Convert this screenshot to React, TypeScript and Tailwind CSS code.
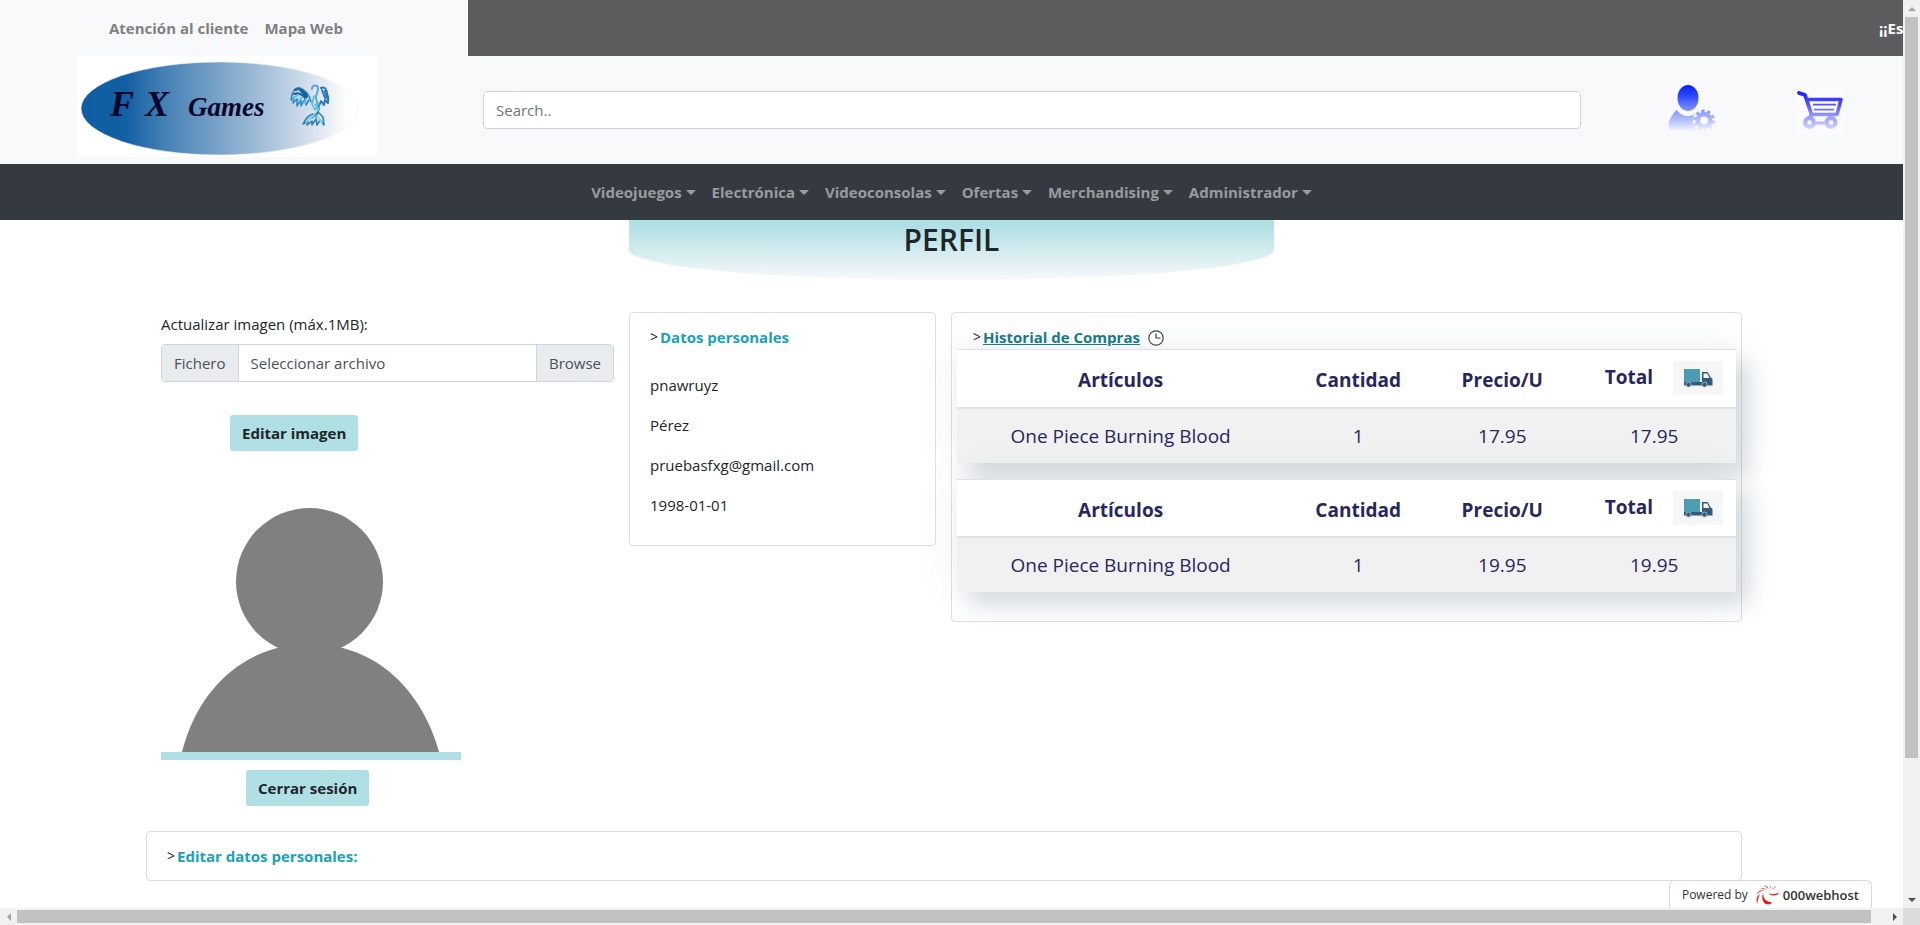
import React from "react";

const navItems = ["Videojuegos", "Electrónica", "Videoconsolas", "Ofertas", "Merchandising", "Administrador"];
const personal = ["pnawruyz", "Pérez", "pruebasfxg@gmail.com", "1998-01-01"];
const orders = [
  { item: "One Piece Burning Blood", qty: 1, price: "17.95", total: "17.95" },
  { item: "One Piece Burning Blood", qty: 1, price: "19.95", total: "19.95" },
];

function Logo() {
  return (
    <svg width="300" height="101" viewBox="0 0 300 101" role="img" aria-label="FX Games" className="block bg-white">
      <defs>
        <linearGradient id="oval" x1="0" x2="1" y1="0" y2="0">
          <stop offset="0" stopColor="#0f5ea3" />
          <stop offset="0.16" stopColor="#125fa3" />
          <stop offset="0.3" stopColor="#4480b5" />
          <stop offset="0.52" stopColor="#80a7cb" />
          <stop offset="0.72" stopColor="#b4cbe0" />
          <stop offset="0.86" stopColor="#dfe7f1" />
          <stop offset="0.96" stopColor="#ffffff" />
        </linearGradient>
      </defs>
      <ellipse cx="142.5" cy="52.5" rx="138.5" ry="46.5" fill="url(#oval)" stroke="#eef1f7" strokeWidth="0.6" />
      <g fill="#07072b" fontFamily="'Liberation Serif', serif" fontStyle="italic" fontWeight="700">
        <text x="33" y="60" fontSize="36">F</text>
        <text x="68" y="60" fontSize="36">X</text>
        <text x="111" y="60" fontSize="27">Games</text>
      </g>
      <g fill="none" strokeLinecap="round" strokeLinejoin="round">
        <path d="M234 46c-1-6-5-12-11-14-4-1-7 2-8 7l-1 5 3-3-1 6 4-4v7l4-6v6l4-7 1 6 3-5" stroke="#2a86c4" strokeWidth="1.5" />
        <path d="M218 34c4-2 9 0 12 5M217 38c5-2 9 1 12 5M222 33l8 8" stroke="#1a5f9e" strokeWidth="2" />
        <path d="M216 42l5-3M222 45l3-4M228 47l1-4" stroke="#5cc6ec" strokeWidth="2" />
        <path d="M235 33c0-4 5-5 6-1 1 4-3 6-2 11l3 9c0 5-5 7-7 10" stroke="#5aa5d4" strokeWidth="2" />
        <path d="M244 32c4-2 6 2 6 6 2 3 1 7 1 9l-3-3-1 5-3-4-2 5M245 34l3 8M248 35l2 7" stroke="#2a78b8" strokeWidth="2" />
        <path d="M237 40l-2 8 3 6 4-6M238 48l4 6" stroke="#49b7e4" strokeWidth="1.5" />
        <path d="M236 58c-5 1-7 5-10 10l5-3-1 4 5-4 0 4 4-6 1 6 3-5 4 5-1-8-5-5-2 5" stroke="#2f7fbb" strokeWidth="1.6" />
        <path d="M232 62l4-2M240 60l5 7M229 66l4-3" stroke="#7fd3f2" strokeWidth="1.6" />
      </g>
    </svg>
  );
}

function UserGear() {
  return (
    <svg width="47" height="46" viewBox="0 0 47 46" aria-hidden="true" className="bg-[#fafafc]">
      <defs>
        <linearGradient id="ug" gradientUnits="userSpaceOnUse" x1="0" x2="0" y1="0" y2="46">
          <stop offset="0" stopColor="#0022ff" />
          <stop offset="0.25" stopColor="#2f4bff" />
          <stop offset="0.6" stopColor="#8f9fff" />
          <stop offset="0.8" stopColor="#bcc6ff" />
          <stop offset="1" stopColor="#f4f6ff" />
        </linearGradient>
      </defs>
      <ellipse cx="20" cy="13" rx="10.5" ry="13" fill="url(#ug)" />
      <path d="M9 25c5 8 16 8 21 1 3 1 4 2 6 3l-10 9 3 8H3c-5-3-2-15 6-21z" fill="url(#ug)" />
      <circle cx="36" cy="35.5" r="11.500" fill="#fafafc" />
      <g fill="none" stroke="url(#ug)">
        <circle cx="36" cy="35.500" r="6.200" strokeWidth="4.600" />
        <circle cx="36" cy="35.500" r="9.500" strokeWidth="3" strokeDasharray="3.300 2.670" />
      </g>
    </svg>
  );
}

function Cart() {
  return (
    <svg width="50" height="50" viewBox="0 0 50 50" aria-hidden="true" className="bg-[#fbfbfd]">
      <defs>
        <linearGradient id="cart" gradientUnits="userSpaceOnUse" x1="0" x2="0" y1="5" y2="46">
          <stop offset="0" stopColor="#1414ff" />
          <stop offset="0.35" stopColor="#5050ff" />
          <stop offset="0.65" stopColor="#9c9cff" />
          <stop offset="1" stopColor="#dedeff" />
        </linearGradient>
      </defs>
      <g stroke="url(#cart)" fill="none" strokeLinecap="round" strokeLinejoin="round">
        <path d="M4 8l6 2 6.500 19.500-2 3.500" strokeWidth="3.800" />
        <path d="M12 14.500h34l-4 15H16.500" strokeWidth="3.600" />
        <path d="M18 19.600h23M19 24.600h20" strokeWidth="1.800" strokeLinecap="butt" />
        <circle cx="14.500" cy="37.500" r="4.400" strokeWidth="4.200" />
        <circle cx="36" cy="37.500" r="4.400" strokeWidth="4.200" />
        <path d="M19 38h12.500v.1" strokeWidth="3" />
      </g>
    </svg>
  );
}

function Truck() {
  return (
    <svg width="50" height="34" viewBox="0 0 50 34" role="img" aria-label="Envío" className="shrink-0 bg-[#f6f6f6]">
      <path d="M11 8h16v13H11z" fill="#4c9db3" />
      <path d="M11 21h18v3.500H11z" fill="#35597a" />
      <path d="M29 11h5.500l3 5 2 2v6.500H29z" fill="#35597a" />
      <path d="M30.500 12.500h3.700l2.300 4.500h-6z" fill="#f4f8fa" />
      <circle cx="15.500" cy="23.500" r="2.500" fill="#35597a" stroke="#9fb6c6" />
      <circle cx="31.500" cy="23.500" r="2.500" fill="#35597a" stroke="#9fb6c6" />
    </svg>
  );
}

function Avatar() {
  return (
    <svg width="300" height="252" viewBox="0 0 300 252" role="img" aria-label="Imagen de perfil" className="block">
      <g fill="#808080">
        <circle cx="148.500" cy="81.500" r="73.500" />
        <path d="M21 252C36 191 82 144 149 144s112 47 129 108z" />
      </g>
    </svg>
  );
}

function HostMark() {
  return (
    <svg width="23" height="20" viewBox="0 0 23 20" aria-hidden="true">
      <g fill="#d81f10">
        <path d="M7.500 8c-1 5 2 9 8.500 9.300-1 3-7 3.200-9-1.300C5.800 13 6 10 7.500 8z" />
        <path d="M12 7c1 2.500 6 3 11 .5-1 3.800-9.500 4.500-11-.5z" />
        <path d="M1.200 19C-.2 14.500.5 11.500 4 9 2.500 12 1.600 15 1.200 19z" />
        <path d="M.5 10C1.500 6.500 4.500 4.800 8 5.500 5 5.800 2.500 7 .5 10z" />
        <path d="M3 4c3-1.500 6-1 7.500 1C8 4 5.500 3.500 3 4zM8 .5c2.500 0 4 1.500 4.500 3.500C11 2.500 10 1.500 8 .5zM14 .3c1 1 1 2.500.3 3.700C14.300 2.500 14.300 1.500 14 .3zM20 1c-.5 2-2.500 3-4.500 3.500C17 3.500 18.500 2.500 20 1z" />
      </g>
    </svg>
  );
}

function OrderTable({ order }: { order: (typeof orders)[number] }) {
  return (
    <table className="mb-4 w-full table-fixed border-collapse bg-white text-center text-[19px] leading-[30px] text-[#27275f] shadow-[14px_14px_20px_rgba(70,100,115,0.18),0_0_36px_rgba(70,100,115,0.1)]">
      <colgroup>
        <col className="w-[42%]" />
        <col className="w-[19%]" />
        <col className="w-[18%]" />
        <col className="w-[21%]" />
      </colgroup>
      <thead>
        <tr className="h-[58px] border-t border-b-2 border-t-[#dee2e6] border-b-[#dee2e6]">
          <th scope="col" className="pt-1">Artículos</th>
          <th scope="col" className="pt-1">Cantidad</th>
          <th scope="col" className="pt-1">Precio/U</th>
          <th scope="col">
            <div className="flex items-center justify-end gap-5 pr-[13px]">
              <span className="pb-0.5">Total</span>
              <Truck />
            </div>
          </th>
        </tr>
      </thead>
      <tbody>
        <tr className="h-[55px] bg-[#f1f1f1]">
          <td>{order.item}</td>
          <td>{order.qty}</td>
          <td>{order.price}</td>
          <td>{order.total}</td>
        </tr>
      </tbody>
    </table>
  );
}

const panel = "rounded border border-[#dfdfdf]";
const actionButton = "h-9 rounded-[3px] bg-[#b0e0e4] px-3 font-bold";

export default function App() {
  return (
    <div className="flex h-screen flex-col overflow-hidden bg-white font-['Open_Sans','Noto_Sans',sans-serif] text-[15px] leading-6 text-[#212529]">
      <div className="flex min-h-0 flex-1">
        <div className="relative min-w-0 flex-1 overflow-hidden">
          <header className="bg-[#f8f9fb]">
            <div className="flex h-14">
              <nav aria-label="Ayuda" className="flex w-[24.6%] items-center gap-4 pl-[109px] font-bold text-[#808080]">
                <a href="#atencion">Atención al cliente</a>
                <a href="#mapa">Mapa Web</a>
              </nav>
              <div className="flex flex-1 items-center justify-end overflow-hidden bg-[#5c5c5e] font-bold text-white">
                <span className="w-6 whitespace-nowrap">¡¡Es</span>
              </div>
            </div>
            <div className="flex h-[108px] items-start">
              <a href="#inicio" className="ml-[77px] shrink-0">
                <Logo />
              </a>
              <input
                type="search"
                aria-label="Buscar"
                placeholder="Search.."
                className="mt-[35px] ml-[106px] h-[38px] min-w-0 flex-1 rounded border border-[#ced4da] bg-white px-3 placeholder:text-[#6c757d]"
              />
              <a href="#perfil" aria-label="Perfil" className="mt-[29px] ml-[87px]">
                <UserGear />
              </a>
              <a href="#carrito" aria-label="Carrito" className="mt-[29px] mr-[58px] ml-20">
                <Cart />
              </a>
            </div>
          </header>
          <nav aria-label="Principal" className="flex h-14 items-center justify-center gap-4 bg-[#343a40] font-bold text-[#999c9f]">
            {navItems.map((label) => (
              <button key={label} type="button" className="flex items-center gap-1 font-bold">
                {label}
                <span className="border-x-5 border-t-5 border-x-transparent border-t-[#999c9f]" />
              </button>
            ))}
          </nav>

          <main className="pr-[161px] pl-[146px]">
            <div className="grid grid-cols-[468fr_307fr_791fr] gap-x-[15px]">
              <div className="col-span-3 grid grid-cols-subgrid">
                <h1 className="col-start-2 col-end-4 mr-[468px] h-[60px] rounded-b-[50%_30px] bg-linear-to-b from-[#b0e0e4] from-10% to-[#f8f9fb] pt-0.5 text-center text-[30px] leading-9 font-semibold">
                  PERFIL
                </h1>
              </div>

              <section aria-label="Imagen" className="mt-8 pl-[15px]">
                <label htmlFor="fichero" className="mb-2 block">Actualizar imagen (máx.1MB):</label>
                <label htmlFor="fichero" className="flex h-[38px] overflow-hidden rounded border border-[#ced4da] leading-9 text-[#495057]">
                  <span className="border-r border-[#ced4da] bg-[#e9ecef] px-3">Fichero</span>
                  <span className="flex-1 px-3">Seleccionar archivo</span>
                  <span className="border-l border-[#ced4da] bg-[#e9ecef] px-3">Browse</span>
                  <input id="fichero" type="file" className="sr-only" />
                </label>
                <div className="mt-[33px] ml-[69px]">
                  <button type="button" className={actionButton}>Editar imagen</button>
                </div>
                <div className="mt-[49px] w-[300px] border-b-8 border-[#b0e0e4]">
                  <Avatar />
                </div>
                <div className="mt-[10px] ml-[85px]">
                  <button type="button" className={actionButton}>Cerrar sesión</button>
                </div>
              </section>

              <section className={`${panel} mt-8 h-[234px] pt-3 pl-5`}>
                <h2 className="flex items-center gap-0.5 font-bold text-[#17a2b8]">
                  <span className="text-[14px] font-normal text-[#212529]">&gt;</span>
                  Datos personales
                </h2>
                <ul className="mt-6 flex flex-col gap-4">
                  {personal.map((value) => (
                    <li key={value}>{value}</li>
                  ))}
                </ul>
              </section>

              <section className={`${panel} mt-8 h-[310px] px-[5px] pt-3`}>
                <h2 className="flex h-6 items-center gap-0.5 pl-4 font-bold">
                  <span className="text-[14px] font-normal">&gt;</span>
                  <a href="#historial" className="text-[#177a87] underline">Historial de Compras</a>
                  <svg width="16" height="16" viewBox="0 0 16 16" aria-hidden="true" className="mt-0.5 ml-1.5" fill="none" stroke="#444" strokeWidth="1.200">
                    <circle cx="8" cy="8" r="7.200" />
                    <path d="M8 3.500V8h4.500" />
                  </svg>
                </h2>
                {orders.map((order) => (
                  <OrderTable key={order.price} order={order} />
                ))}
              </section>
            </div>

            <section className={`${panel} mt-[25px] h-[50px] pt-3 pl-5`}>
              <h2 className="flex items-center gap-0.5 font-bold text-[#17a2b8]">
                <span className="text-[14px] font-normal text-[#212529]">&gt;</span>
                Editar datos personales:
              </h2>
            </section>
          </main>

          <a
            href="#host"
            className="absolute right-[31px] bottom-0 flex h-7 items-center rounded-t-md border border-b-0 border-[#d8d8d8] bg-white px-3 text-[12px] text-[#333]"
          >
            Powered by
            <span className="mr-1 ml-2"><HostMark /></span>
            <span className="text-[13px] font-semibold">000webhost</span>
          </a>
        </div>
        <div aria-hidden="true" className="flex w-[17px] flex-col items-center bg-[#f1f1f1]">
          <span className="flex h-[17px] items-center">
            <span className="border-x-4 border-b-4 border-x-transparent border-b-[#a3a3a3]" />
          </span>
          <span className="h-[741px] w-[13px] bg-[#c1c1c1]" />
          <span className="mt-auto flex h-[17px] items-center">
            <span className="border-x-4 border-t-4 border-x-transparent border-t-[#505050]" />
          </span>
        </div>
      </div>
      <div aria-hidden="true" className="flex h-[17px] items-center bg-[#f1f1f1]">
        <span className="flex w-[17px] justify-center">
          <span className="border-y-4 border-r-4 border-y-transparent border-r-[#a3a3a3]" />
        </span>
        <span className="h-[13px] flex-1 bg-[#c1c1c1]" />
        <span className="flex w-8 justify-end pr-1.5">
          <span className="border-y-4 border-l-4 border-y-transparent border-l-[#505050]" />
        </span>
        <span className="h-full w-[17px] bg-[#dcdcdc]" />
      </div>
    </div>
  );
}
